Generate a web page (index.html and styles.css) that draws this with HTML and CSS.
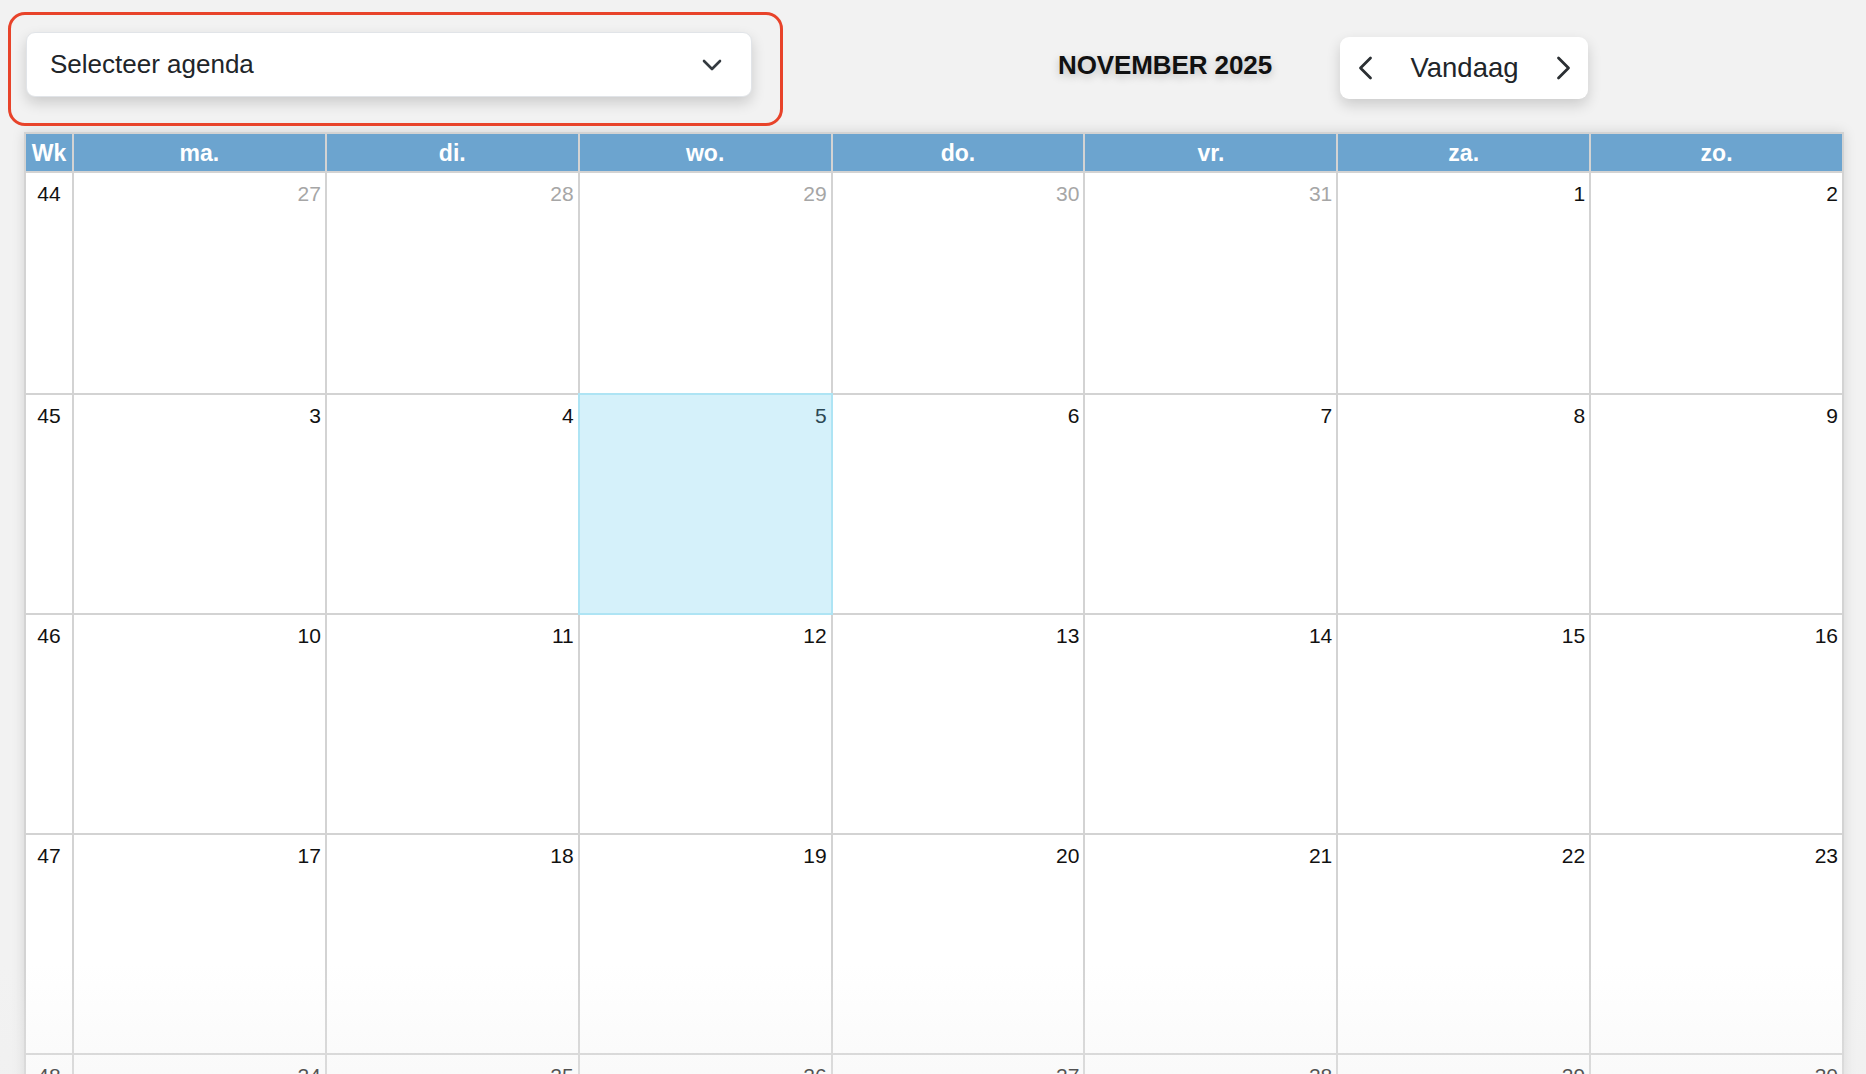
FILE: index.html
```html
<!DOCTYPE html>
<html lang="nl">
<head>
<meta charset="utf-8">
<title>Agenda</title>
<link rel="stylesheet" href="styles.css">
</head>
<body>
<div class="page">
  <header class="toolbar">
    <div class="picker-frame">
      <div class="select">
        <span class="select-label">Selecteer agenda</span>
        <svg class="select-chevron" width="20" height="12" viewBox="0 0 20 12"><path d="M2 2 L10 10 L18 2" fill="none" stroke="#343a40" stroke-width="2.6" stroke-linecap="round" stroke-linejoin="round"/></svg>
      </div>
    </div>
    <h1 class="month">NOVEMBER 2025</h1>
    <div class="nav">
      <span class="nav-arrow"><svg width="15" height="24" viewBox="0 0 15 24"><path d="M12.5 2 L2.5 12 L12.5 22" fill="none" stroke="#2b2f33" stroke-width="2.8" stroke-linecap="round" stroke-linejoin="round"/></svg></span>
      <span class="nav-today">Vandaag</span>
      <span class="nav-arrow"><svg width="15" height="24" viewBox="0 0 15 24"><path d="M2.5 2 L12.5 12 L2.5 22" fill="none" stroke="#2b2f33" stroke-width="2.8" stroke-linecap="round" stroke-linejoin="round"/></svg></span>
    </div>
  </header>

  <div class="calendar">
    <div class="hd">Wk</div>
    <div class="hd">ma.</div>
    <div class="hd">di.</div>
    <div class="hd">wo.</div>
    <div class="hd">do.</div>
    <div class="hd">vr.</div>
    <div class="hd">za.</div>
    <div class="hd">zo.</div>

    <div class="wk">44</div>
    <div class="day other">27</div>
    <div class="day other">28</div>
    <div class="day other">29</div>
    <div class="day other">30</div>
    <div class="day other">31</div>
    <div class="day">1</div>
    <div class="day">2</div>

    <div class="wk">45</div>
    <div class="day">3</div>
    <div class="day">4</div>
    <div class="day today">5</div>
    <div class="day">6</div>
    <div class="day">7</div>
    <div class="day">8</div>
    <div class="day">9</div>

    <div class="wk">46</div>
    <div class="day">10</div>
    <div class="day">11</div>
    <div class="day">12</div>
    <div class="day">13</div>
    <div class="day">14</div>
    <div class="day">15</div>
    <div class="day">16</div>

    <div class="wk">47</div>
    <div class="day">17</div>
    <div class="day">18</div>
    <div class="day">19</div>
    <div class="day">20</div>
    <div class="day">21</div>
    <div class="day">22</div>
    <div class="day">23</div>

    <div class="wk">48</div>
    <div class="day">24</div>
    <div class="day">25</div>
    <div class="day">26</div>
    <div class="day">27</div>
    <div class="day">28</div>
    <div class="day">29</div>
    <div class="day">30</div>
  </div>
  <div class="fade"></div>
</div>
</body>
</html>
```

FILE: styles.css
```css
html, body {
  margin: 0;
  padding: 0;
  height: 100%;
  overflow: hidden;
  background: #f2f2f2;
  font-family: "Liberation Sans", Arial, Helvetica, sans-serif;
  color: #111;
}

.page {
  position: relative;
  height: 100%;
}

.toolbar {
  display: flex;
  align-items: flex-start;
  padding: 12px 0 0 8px;
}

.picker-frame {
  width: 726px;
  padding: 17px 28px 26px 15px;
  border: 3px solid #e8432a;
  border-radius: 17px;
}

.select {
  box-sizing: border-box;
  height: 65px;
  display: flex;
  align-items: center;
  justify-content: space-between;
  padding: 0 29px 0 23px;
  background: #fff;
  border: 1px solid #e1e4e8;
  border-radius: 9px;
  box-shadow: 0 6px 14px rgba(0, 0, 0, 0.16);
}

.select-label {
  font-size: 26px;
  color: #212529;
}

.select-chevron {
  display: block;
}

.month {
  margin: 38px 0 0 275px;
  font-size: 26px;
  font-weight: bold;
  line-height: 30px;
  color: #111;
  text-shadow: 0 3px 8px rgba(0, 0, 0, 0.22);
  letter-spacing: -0.1px;
}

.nav {
  box-sizing: border-box;
  margin: 25px 0 0 68px;
  width: 248px;
  height: 62px;
  display: flex;
  align-items: center;
  justify-content: space-between;
  padding: 0 17px 0 18px;
  background: #fff;
  border-radius: 9px;
  box-shadow: 0 6px 14px rgba(0, 0, 0, 0.16);
}

.nav-arrow {
  display: flex;
}

.nav-today {
  font-size: 27.5px;
  color: #212529;
}

.calendar {
  margin: 6px 22px 0 24px;
  display: grid;
  grid-template-columns: 46px repeat(7, 1fr);
  grid-template-rows: 37px 220px repeat(4, 218px);
  gap: 2px;
  padding: 2px;
  background: #d3d3d3;
  box-shadow: 0 0 12px rgba(0, 0, 0, 0.13);
}

.hd {
  background: #6ca4cf;
  color: #fff;
  font-weight: bold;
  font-size: 23px;
  line-height: 38px;
  text-align: center;
}

.wk,
.day {
  background: #fff;
  font-size: 21px;
  line-height: 24px;
  padding: 9px 4px 0 4px;
}

.wk {
  text-align: center;
}

.day {
  text-align: right;
}

.day.other {
  color: #a6a6a6;
}

.day.today {
  background: #d5f1fa;
  color: #2c4855;
  outline: 2px solid #aee4f4;
}

.fade {
  position: absolute;
  left: 0;
  right: 0;
  bottom: 0;
  height: 110px;
  background: linear-gradient(to bottom, rgba(238, 238, 238, 0), rgba(238, 238, 238, 0.3));
  pointer-events: none;
}
```
